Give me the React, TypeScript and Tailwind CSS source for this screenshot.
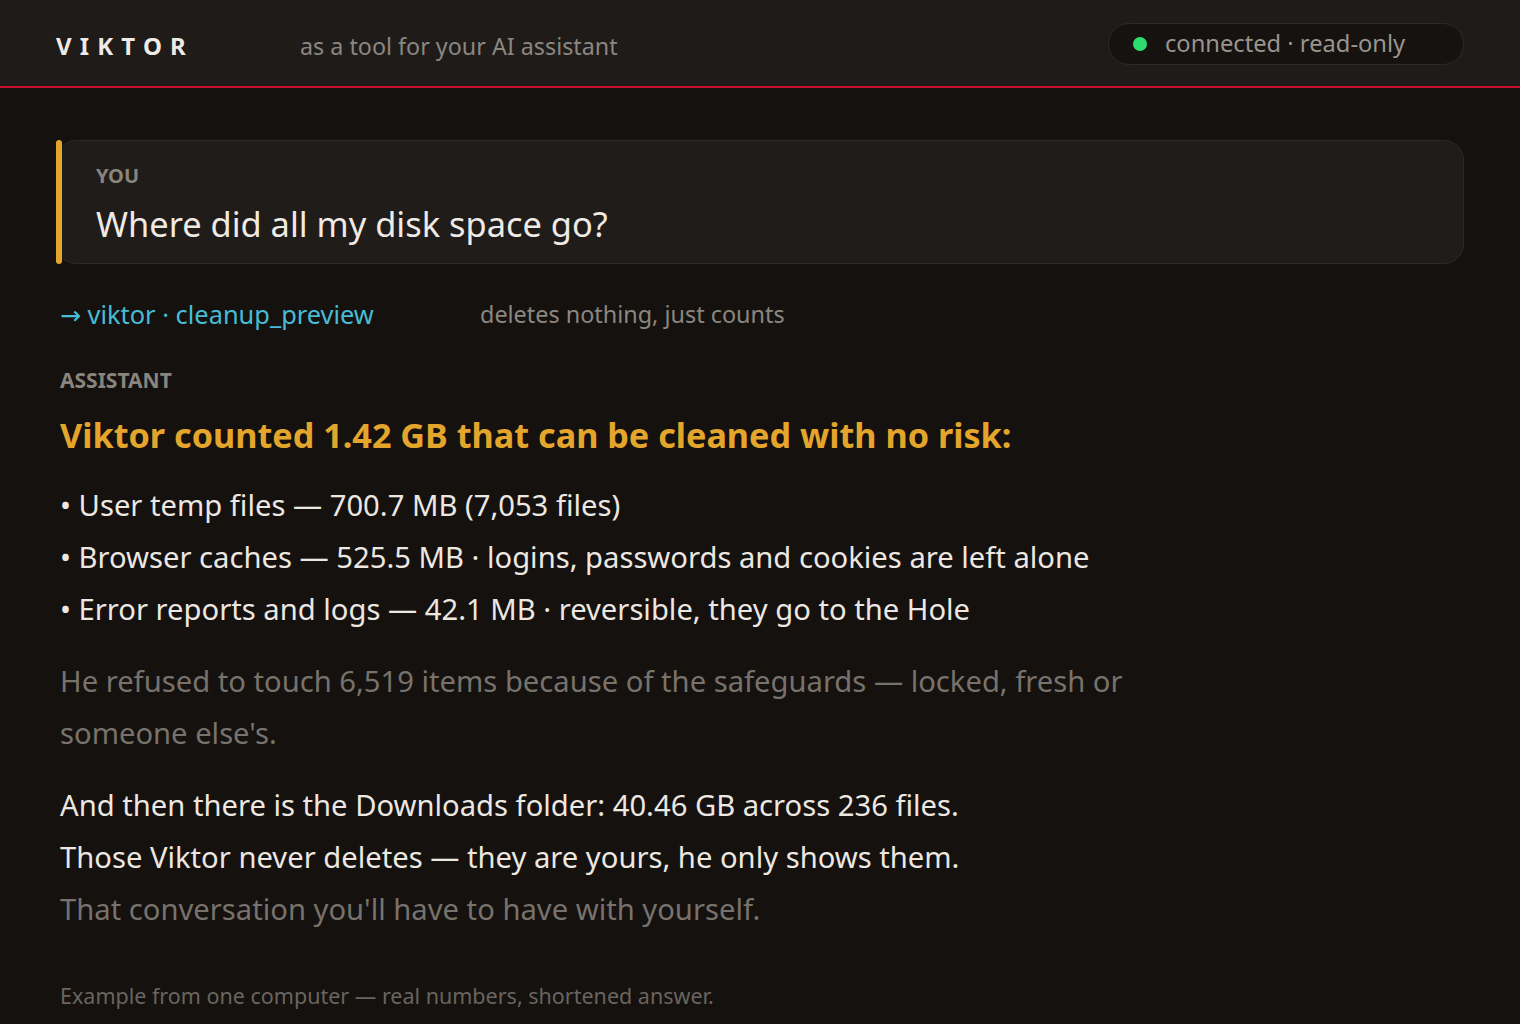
import React from "react";

const font = { fontFamily: '"Noto Sans", "Open Sans", sans-serif' };

export default function App() {
  return (
    <div className="min-h-[1024px] bg-[#14110f] text-[#ece7e1]" style={font}>
      <header className="h-[88px] bg-[#1e1b19] border-b-2 border-[#c8102e] flex items-center px-[56px] pt-[6px]">
        <div className="w-[244px] text-[24px] font-bold tracking-[0.34em] text-[#eeeae5]">VIKTOR</div>
        <div className="text-[23.3px] text-[#8c8680]">as a tool for your AI assistant</div>
        <div className="ml-auto h-[42px] w-[356px] rounded-full border-[1.5px] border-[#2c2926] bg-[#15120f] flex items-center pl-[24px] -mt-[4px]">
          <span className="w-[14px] h-[14px] rounded-full bg-[#2edb6f]" />
          <span className="ml-[18px] text-[23.7px] text-[#9a948e]">connected · read-only</span>
        </div>
      </header>

      <main className="px-[56px] pt-[52px]">
        <section className="relative h-[124px] rounded-[20px] border border-[#2e2a27] bg-[#1f1c1a] pl-[39px] pt-[21px]">
          <div className="absolute -left-px -top-px -bottom-px w-[6px] rounded-[3px] bg-[#e3a52c]" />
          <div className="text-[20px] font-bold text-[#8a847e] leading-[28px]">YOU</div>
          <div className="mt-[8px] text-[34.4px] leading-[52px] text-[#efeae4]">Where did all my disk space go?</div>
        </section>

        <div className="pl-[4px] mt-[32px] flex items-center h-[38px]">
          <span className="w-[420px] text-[25.4px] text-[#48bcd6]">
            <span style={{ fontFamily: '"DejaVu Sans", sans-serif' }} className="text-[25px]">→</span> viktor · cleanup_preview
          </span>
          <span className="text-[23.4px] text-[#8c8680]">deletes nothing, just counts</span>
        </div>

        <div className="pl-[4px] mt-[32px] text-[21px] font-bold text-[#8a847e] leading-[28px]">ASSISTANT</div>

        <h1 className="pl-[4px] mt-[19px] text-[34.2px] font-bold text-[#e3a52c] leading-[44px]">
          Viktor counted 1.42 GB that can be cleaned with no risk:
        </h1>

        <ul className="pl-[4px] mt-[22px] text-[29.2px] leading-[52px] text-[#ece7e1]">
          <li>• User temp files — 700.7 MB (7,053 files)</li>
          <li>• Browser caches — 525.5 MB · logins, passwords and cookies are left alone</li>
          <li>• Error reports and logs — 42.1 MB · reversible, they go to the Hole</li>
        </ul>

        <p className="pl-[4px] mt-[20px] max-w-[1140px] text-[29.2px] leading-[52px] text-[#78726c]">
          He refused to touch 6,519 items because of the safeguards — locked, fresh or someone else's.
        </p>

        <div className="pl-[4px] mt-[20px] text-[29.2px] leading-[52px]">
          <p className="text-[#ece7e1]">And then there is the Downloads folder: 40.46 GB across 236 files.</p>
          <p className="text-[#ece7e1]">Those Viktor never deletes — they are yours, he only shows them.</p>
          <p className="text-[#78726c]">That conversation you'll have to have with yourself.</p>
        </div>

        <p className="pl-[4px] mt-[46px] text-[21.5px] leading-[30px] text-[#6a645e]">
          Example from one computer — real numbers, shortened answer.
        </p>
      </main>
    </div>
  );
}
